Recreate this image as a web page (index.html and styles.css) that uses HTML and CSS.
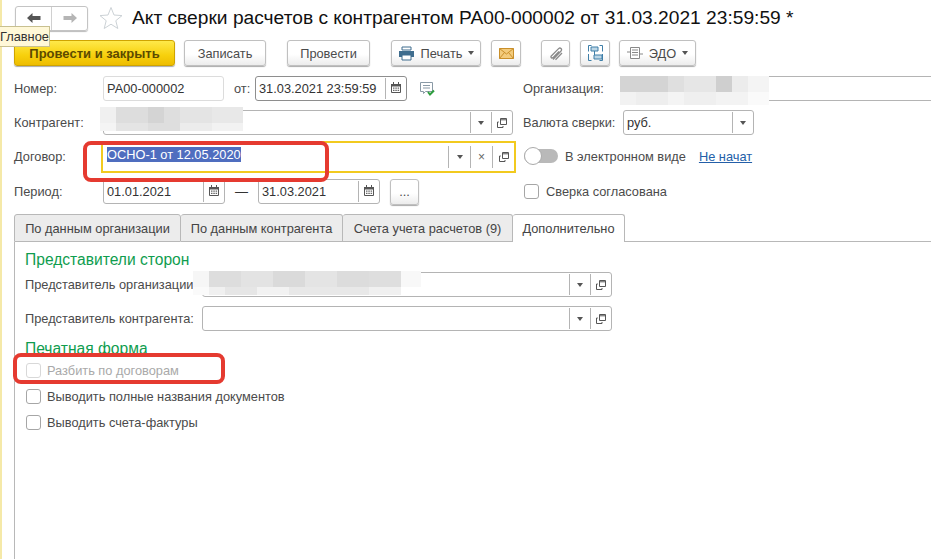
FILE: index.html
```html
<!DOCTYPE html>
<html lang="ru">
<head>
<meta charset="utf-8">
<title>Акт сверки</title>
<link rel="stylesheet" href="styles.css">
</head>
<body>
<svg class="defs" width="0" height="0">
  <symbol id="cal" viewBox="0 0 10 11">
    <path d="M.5 2.500h9v8h-9z" fill="none" stroke="#555"/>
    <path d="M0 2h10v2.500H0z" fill="#555"/>
    <path d="M2.500 0v2M7.500 0v2" stroke="#555"/>
    <path d="M2 5.500h1.500v1.300H2zM4.300 5.500h1.500v1.300H4.300zM6.600 5.500h1.500v1.300H6.600zM2 7.800h1.500v1.300H2zM4.300 7.800h1.500v1.300H4.300zM6.600 7.800h1.500v1.300H6.600z" fill="#666"/>
  </symbol>
  <symbol id="open" viewBox="0 0 10 10">
    <path d="M3.500.500h6v6h-6z" fill="none" stroke="#555"/>
    <path d="M3.500 1.800h6" stroke="#555"/>
    <path d="M1.800 4H.5v5.500H6V8" fill="none" stroke="#555"/>
  </symbol>
</svg>
<main class="page">
  <header class="title-row">
    <div class="nav">
      <span class="nav-btn">
        <svg width="16" height="12" viewBox="0 0 16 12"><path d="M1 6l5.500-5v3h8v4h-8v3z" fill="#555"/></svg>
      </span>
      <span class="nav-btn">
        <svg width="16" height="12" viewBox="0 0 16 12"><path d="M15 6l-5.500-5v3h-8v4h8v3z" fill="#b5b5b5"/></svg>
      </span>
    </div>
    <svg class="star" width="24" height="24" viewBox="0 0 24 24"><path d="M12 1.500l3 7.500 8 .6-6.200 5.100 2 7.800-6.800-4.300-6.800 4.300 2-7.800L1 9.600l8-.6z" fill="#fff" stroke="#ccd2d6"/></svg>
    <h1 class="title">Акт сверки расчетов с контрагентом РА00-000002 от 31.03.2021 23:59:59 *</h1>
  </header>

  <div class="toolbar">
    <button class="btn btn-main">Провести и закрыть</button>
    <button class="btn btn-save">Записать</button>
    <button class="btn btn-post">Провести</button>
    <button class="btn btn-print">
      <svg width="17" height="15" viewBox="0 0 17 15"><path d="M4 1h9v3H4z" fill="#fff" stroke="#3f6d8e"/><path d="M1 5h15v6H1z" fill="#3f6d8e"/><path d="M4 9h9v5H4z" fill="#fff" stroke="#3f6d8e"/></svg>
      <span>Печать</span><i class="caret"></i>
    </button>
    <button class="btn btn-mail">
      <svg width="15" height="11" viewBox="0 0 15 11"><path d="M.5.500h14v10H.5z" fill="#f3cb7c" stroke="#c98f2a"/><path d="M.5.500l7 5.500 7-5.500M.5 10.500l5-6M14.500 10.500l-5-6" fill="none" stroke="#c98f2a"/></svg>
    </button>
    <button class="btn btn-clip">
      <svg width="14" height="15" viewBox="0 0 14 15"><path d="M4 13.500L12 5c1.500-1.700-.7-4-2.400-2.400L2.300 10c-1 1.200.5 2.700 1.700 1.600L10 5.500M6.500 13.800L13 7" fill="none" stroke="#8a8a8a" stroke-width="1.300"/></svg>
    </button>
    <button class="btn btn-struct">
      <svg width="15" height="16" viewBox="0 0 15 16"><path d="M.5.500h3M.5.500v6M11.500.500h3v6M.5 9v6.500h3M14.500 9v6.500h-3" fill="none" stroke="#3f7fa8"/><path d="M3 2h7v4H3zM6 10h8v4H6z" fill="#bcd6e6" stroke="#3f7fa8"/><path d="M6.500 6v4" stroke="#3f7fa8"/></svg>
    </button>
    <button class="btn btn-edo">
      <svg width="16" height="14" viewBox="0 0 16 14"><path d="M3.500 1.500h9v11h-9z" fill="#fff" stroke="#888"/><path d="M5 4h6M5 6.500h6M5 9h6M0 6h3M13 8h3" stroke="#888"/></svg>
      <span>ЭДО</span><i class="caret"></i>
    </button>
  </div>

  <section class="form">
    <div class="row">
      <label class="lbl lbl-main">Номер:</label>
      <div class="field f-number"><span class="val">РА00-000002</span></div>
      <label class="lbl lbl-from">от:</label>
      <div class="field f-date strong">
        <span class="val">31.03.2021 23:59:59</span>
        <span class="seg"><svg class="ico-cal" width="10" height="11"><use href="#cal"/></svg></span>
      </div>
      <svg class="doc-ok" width="16" height="14" viewBox="0 0 16 14"><path d="M.500.500h12v9h-7l-2 2v-2h-3z" fill="#fff" stroke="#8a9aa6"/><path d="M3 3.500h7M3 6h7" stroke="#8a9aa6"/><path d="M8 10l2 2.500 4-4" fill="none" stroke="#2e9e3e" stroke-width="2"/></svg>
      <label class="lbl lbl-org">Организация:</label>
      <div class="field f-org"></div>
    </div>

    <div class="row row-2">
      <label class="lbl lbl-main">Контрагент:</label>
      <div class="field f-partner">
        <span class="val"></span>
        <span class="seg"><i class="caret"></i></span>
        <span class="seg"><svg width="10" height="10"><use href="#open"/></svg></span>
      </div>
      <label class="lbl lbl-cur">Валюта сверки:</label>
      <div class="field f-cur">
        <span class="val">руб.</span>
        <span class="seg"><i class="caret"></i></span>
      </div>
    </div>

    <div class="row row-3">
      <label class="lbl lbl-contract">Договор:</label>
      <div class="field f-contract">
        <span class="val"><span class="selected">ОСНО-1 от 12.05.2020</span></span>
        <span class="seg"><i class="caret"></i></span>
        <span class="seg seg-x">×</span>
        <span class="seg"><svg width="10" height="10"><use href="#open"/></svg></span>
      </div>
      <span class="switch"><i class="knob"></i></span>
      <span class="txt switch-label">В электронном виде</span>
      <a class="link">Не начат</a>
    </div>

    <div class="row row-4">
      <label class="lbl lbl-main">Период:</label>
      <div class="field f-period">
        <span class="val">01.01.2021</span>
        <span class="seg"><svg class="ico-cal" width="10" height="11"><use href="#cal"/></svg></span>
      </div>
      <span class="dash">—</span>
      <div class="field f-period">
        <span class="val">31.03.2021</span>
        <span class="seg"><svg class="ico-cal" width="10" height="11"><use href="#cal"/></svg></span>
      </div>
      <button class="btn btn-dots">...</button>
      <label class="check check-agreed"><i class="box"></i><span>Сверка согласована</span></label>
    </div>
  </section>

  <nav class="tabs">
    <span class="tab t1">По данным организации</span>
    <span class="tab t2">По данным контрагента</span>
    <span class="tab t3">Счета учета расчетов (9)</span>
    <span class="tab t4 active">Дополнительно</span>
    <span class="tabs-rest"></span>
  </nav>

  <section class="panel">
    <h2 class="group">Представители сторон</h2>
    <div class="rep-row">
      <label class="lbl lbl-rep">Представитель организации:</label>
      <div class="field f-rep">
        <span class="val"></span>
        <span class="seg"><i class="caret"></i></span>
        <span class="seg"><svg width="10" height="10"><use href="#open"/></svg></span>
      </div>
    </div>
    <div class="rep-row rep-row-2">
      <label class="lbl lbl-rep">Представитель контрагента:</label>
      <div class="field f-rep">
        <span class="val"></span>
        <span class="seg"><i class="caret"></i></span>
        <span class="seg"><svg width="10" height="10"><use href="#open"/></svg></span>
      </div>
    </div>
    <h2 class="group group-print">Печатная форма</h2>
    <label class="check disabled"><i class="box"></i><span>Разбить по договорам</span></label>
    <label class="check"><i class="box"></i><span>Выводить полные названия документов</span></label>
    <label class="check"><i class="box"></i><span>Выводить счета-фактуры</span></label>
  </section>

  <div class="tooltip">Главное</div>
  <div class="blur blur-org"></div>
  <div class="blur blur-partner"></div>
  <div class="blur blur-rep"></div>
  <div class="mark mark-contract"></div>
  <div class="mark mark-split"></div>
</main>
</body>
</html>
```
FILE: styles.css
```css
* { box-sizing: border-box; }
html, body { margin: 0; padding: 0; background: #fff; }
body { font: 12.800px "Liberation Sans", Arial, sans-serif; color: #4b4b4b; overflow: hidden; }
.defs { position: absolute; }
.page { position: relative; width: 931px; height: 559px; overflow: hidden; padding-left: 14px; background: linear-gradient(#f5e9a8, #f5e9a8) 0 0 / 2px 100% no-repeat; }

.title-row { display: flex; align-items: center; height: 40px; padding: 0 0 4px 1px; }
.nav { display: flex; flex: none; width: 73px; height: 25px; border: 1px solid #c4c4c4; border-radius: 3px; box-shadow: 0 1px 1px #bbb; }
.nav-btn { flex: 1; display: flex; align-items: center; justify-content: center; }
.nav-btn + .nav-btn { border-left: 1px solid #d0d0d0; }
.star { flex: none; margin-left: 11px; }
.title { margin: 0 0 0 9px; font-size: 19.200px; font-weight: 400; color: #111; white-space: nowrap; }

.toolbar { display: flex; height: 26px; }
.btn { display: flex; align-items: center; justify-content: center; gap: 6px; height: 26px; padding: 0; font: 12.800px "Liberation Sans", Arial, sans-serif; color: #4b4b4b; background: linear-gradient(#fff, #fff 55%, #ececec); border: 1px solid #c0c0c0; border-radius: 3px; box-shadow: 0 1px 1px #aaa; }
.btn-main { width: 161px; font-weight: 700; font-size: 13px; color: #5c4a00; background: linear-gradient(#fee94a, #f7d00c 60%, #eebd00); border-color: #cfa400; }
.btn-save { width: 82px; margin-left: 9px; }
.btn-post { width: 83px; margin-left: 21px; }
.btn-print { width: 90px; margin-left: 21px; }
.btn-mail { width: 30px; margin-left: 10px; }
.btn-clip { width: 29px; margin-left: 20px; }
.btn-struct { width: 30px; margin-left: 10px; }
.btn-edo { width: 77px; margin-left: 9px; }
.caret { display: inline-block; width: 0; height: 0; border: 3.500px solid transparent; border-top: 4px solid #555; border-bottom: 0; }

.form { padding-top: 10px; }
.row { display: flex; align-items: center; height: 25px; }
.row-2 { margin-top: 9px; }
.row-3 { margin-top: 6px; height: 32px; }
.row-4 { margin-top: 6px; }
.lbl { white-space: nowrap; }
.lbl-main { width: 89px; }
.lbl-contract { width: 87px; margin-bottom: 2px; }
.lbl-from { width: 31px; padding-left: 10px; }
.lbl-org { margin-left: 87px; width: 100px; }
.lbl-cur { margin-left: 10px; width: 100px; }

.field { display: flex; height: 25px; background: #fff; border: 1px solid #b4b4b4; border-radius: 3px; color: #333; }
.val { flex: 1; padding: 0 3px; line-height: 23px; white-space: nowrap; overflow: hidden; }
.seg { display: flex; align-items: center; justify-content: center; flex: none; width: 21px; margin: 1px 0; border-left: 1px solid #b4b4b4; }
.seg-x { font-size: 12px; color: #666; }
.ico-cal { margin-bottom: 2px; }
.strong { border-color: #8e8e8e; }
.f-number { width: 121px; border-color: #dcdcdc; }
.f-date { width: 152px; }
.doc-ok { margin-left: 13px; }
.f-org { flex: 1; border-width: 1px 0; border-radius: 0; }
.f-partner { width: 410px; }
.f-cur { width: 131px; }
.f-contract { width: 415px; height: 32px; border: 2px solid #f2ca1f; border-radius: 0; }
.f-contract .val { padding: 0 4px; line-height: 24px; }
.f-contract .seg { width: 22px; margin: 3px 0; }
.selected { background: #4f6dbf; color: #fff; }
.switch { position: relative; flex: none; width: 34px; height: 14px; margin: 0 0 2px 8px; background: #b9b9b9; border-radius: 7px; }
.knob { position: absolute; left: 0; top: -2px; width: 18px; height: 18px; background: #fff; border: 1px solid #aaa; border-radius: 50%; }
.switch-label { margin: 0 0 2px 7px; }
.link { margin: 0 0 2px 13px; color: #245fa8; text-decoration: underline; }

.f-period { width: 122px; }
.dash { width: 33px; text-align: center; color: #333; font-size: 13px; }
.btn-dots { width: 29px; height: 26px; margin-left: 10px; }
.check { display: flex; align-items: center; height: 26px; white-space: nowrap; }
.box { flex: none; width: 15px; height: 15px; background: #fff; border: 1px solid #a6a6a6; border-radius: 3px; }
.check span { margin-left: 6px; }
.check-agreed { margin-left: 105px; }
.check-agreed span { margin-left: 7px; }
.disabled { color: #a9a9a9; }
.disabled .box { border-color: #d8d8d8; }

.tabs { display: flex; height: 28px; margin-top: 10px; }
.tab { display: flex; align-items: center; justify-content: center; height: 28px; background: #ececec; border: 1px solid #b8b8b8; border-left: 0; color: #444; border-radius: 3px 3px 0 0; white-space: nowrap; }
.t1 { width: 167px; border-left: 1px solid #b8b8b8; }
.t2 { width: 162px; }
.t3 { width: 170px; }
.t4 { width: 112px; }
.active { background: #fff; border-bottom: 0; }
.tabs-rest { flex: 1; border-bottom: 1px solid #b8b8b8; }

.panel { display: flex; flex-direction: column; height: 320px; padding-left: 10px; border-left: 1px solid #b8b8b8; }
.group { margin: 9px 0 0; font-size: 15.600px; line-height: 18px; font-weight: 400; color: #0f9d4f; }
.rep-row { display: flex; align-items: center; margin-top: 3px; height: 25px; }
.rep-row-2 { margin-top: 9px; }
.lbl-rep { width: 177px; }
.f-rep { width: 410px; }
.group-print { margin-top: 9px; }
.panel .check { margin-left: 1px; }
.panel .group-print + .check { margin-top: -1px; }

.tooltip { position: absolute; left: 0; top: 26px; width: 50px; height: 21px; overflow: hidden; line-height: 19px; color: #333; background: #fff8d8; border: 1px solid #c8c090; border-left: 0; text-align: right; padding-right: 3px; white-space: nowrap; }

.blur { position: absolute; background-repeat: no-repeat; }
.blur-org { left: 620px; top: 76px; width: 149px; height: 29px;
  background-image:
    linear-gradient(90deg, #d4d4d4 0 48px, #dfdfdf 48px 64px, #e6e6e6 64px 96px, #cfcfcf 96px 112px, #ececec 112px 128px, #f4f4f4 128px),
    linear-gradient(90deg, #f2f2f2 0 16px, #eeeeee 16px 48px, #f4f4f4 48px 64px, #efefef 64px 96px, #f3f3f3 96px 128px, #fafafa 128px);
  background-size: 100% 16px, 100% 13px;
  background-position: 0 0, 0 16px; }
.blur-partner { left: 100px; top: 107px; width: 143px; height: 24px;
  background-image:
    linear-gradient(90deg, #f0f0f0 0 16px, #dddddd 16px 48px, #d4d4d4 48px 64px, #dedede 64px 80px, #e4e4e4 80px 112px, #e8e8e8 112px),
    linear-gradient(90deg, #f4f4f4 0 16px, #e4e4e4 16px 48px, #dedede 48px 80px, #ececec 80px 112px, #f2f2f2 112px);
  background-size: 100% 16px, 100% 8px;
  background-position: 0 0, 0 16px; }
.blur-rep { left: 193px; top: 271px; width: 228px; height: 24px;
  background-image:
    linear-gradient(90deg, #f6f6f6 0 16px, #dddddd 16px 48px, #e3e3e3 48px 80px, #dadada 80px 112px, #e4e4e4 112px 144px, #dcdcdc 144px 176px, #dedede 176px 208px, #f8f8f8 208px),
    linear-gradient(90deg, #fafafa 0 16px, #f0f0f0 16px 32px, #e6e6e6 32px 64px, #f2f2f2 64px 96px, #e8e8e8 96px 176px, #f0f0f0 176px 208px, rgba(255,255,255,0) 208px);
  background-size: 100% 16px, 100% 8px;
  background-position: 0 0, 0 16px; }

.mark { position: absolute; border: 4px solid #e53a30; border-radius: 8px; }
.mark-contract { left: 83px; top: 141px; width: 246px; height: 41px; }
.mark-split { left: 13px; top: 353px; width: 212px; height: 31px; }
```
